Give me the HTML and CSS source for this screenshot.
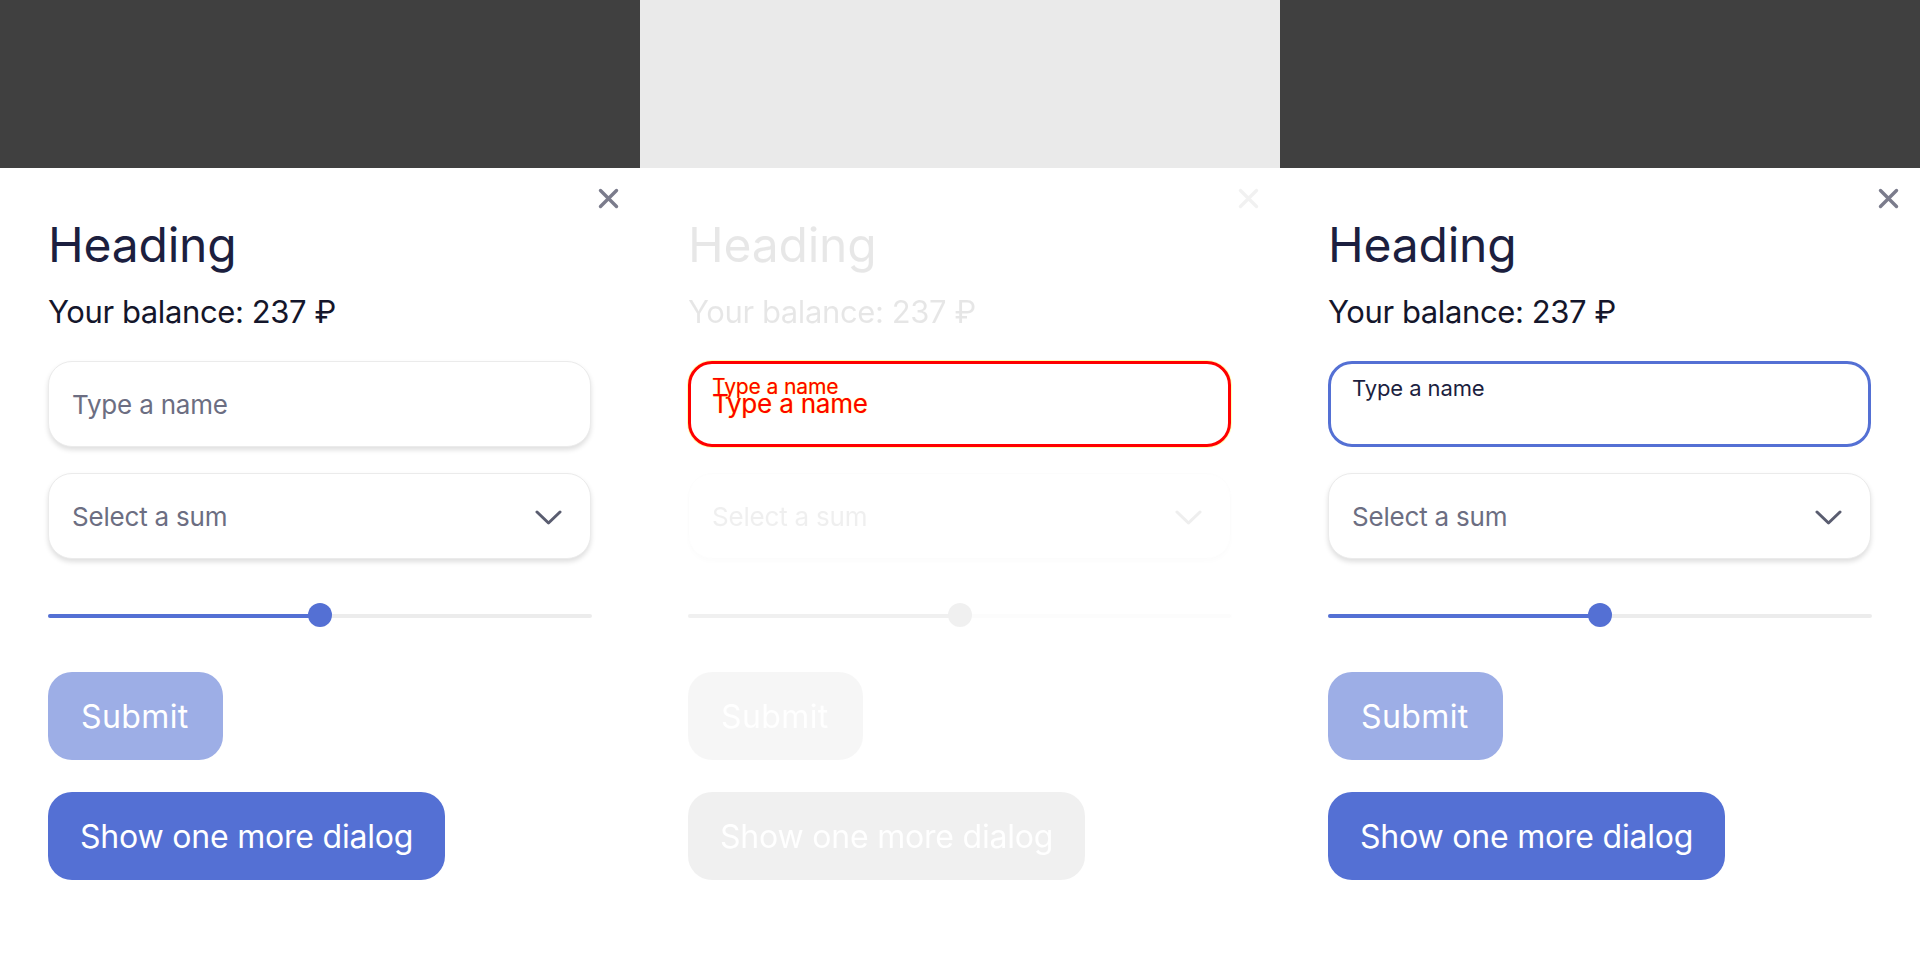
FILE: index.html
```html
<!DOCTYPE html>
<html lang="en">
<head>
<meta charset="utf-8">
<title>Dialogs</title>
<link rel="stylesheet" href="styles.css">
</head>
<body>
<div class="row">

  <section class="panel">
    <div class="band"></div>
    <div class="dialog">
      <button class="close" aria-label="Close"><svg viewBox="0 0 21 21" width="21" height="21"><path d="M2.5 2.5 L18.5 18.5 M18.5 2.5 L2.5 18.5" stroke="currentColor" stroke-width="3.4" stroke-linecap="round"/></svg></button>
      <h1 class="title">Heading</h1>
      <p class="balance">Your balance: 237 ₽</p>
      <div class="field"><span class="placeholder">Type a name</span></div>
      <div class="field select"><span class="placeholder">Select a sum</span>
        <svg class="chev" viewBox="0 0 27 15" width="27" height="15"><path d="M2 2 L13.5 13 L25 2" fill="none" stroke="currentColor" stroke-width="3" stroke-linecap="round" stroke-linejoin="round"/></svg>
      </div>
      <div class="slider"><div class="track"><div class="fill" style="width:50%"></div></div><div class="thumb" style="left:50%"></div></div>
      <button class="btn btn-light submit">Submit</button>
      <button class="btn btn-primary more">Show one more dialog</button>
    </div>
  </section>

  <section class="panel">
    <div class="band band-light"></div>
    <div class="dialog">
      <button class="close ghost" aria-label="Close"><svg viewBox="0 0 21 21" width="21" height="21"><path d="M2.5 2.5 L18.5 18.5 M18.5 2.5 L2.5 18.5" stroke="currentColor" stroke-width="3.4" stroke-linecap="round"/></svg></button>
      <h1 class="title ghost">Heading</h1>
      <p class="balance ghost">Your balance: 237 ₽</p>
      <div class="field field-error"><span class="label">Type a name</span><span class="placeholder">Type a name</span></div>
      <div class="field select ghost"><span class="placeholder">Select a sum</span>
        <svg class="chev" viewBox="0 0 27 15" width="27" height="15"><path d="M2 2 L13.5 13 L25 2" fill="none" stroke="currentColor" stroke-width="3" stroke-linecap="round" stroke-linejoin="round"/></svg>
      </div>
      <div class="slider ghost"><div class="track"><div class="fill" style="width:50%"></div></div><div class="thumb" style="left:50%"></div></div>
      <button class="btn btn-light submit ghost">Submit</button>
      <button class="btn btn-primary more ghost">Show one more dialog</button>
    </div>
  </section>

  <section class="panel">
    <div class="band"></div>
    <div class="dialog">
      <button class="close" aria-label="Close"><svg viewBox="0 0 21 21" width="21" height="21"><path d="M2.5 2.5 L18.5 18.5 M18.5 2.5 L2.5 18.5" stroke="currentColor" stroke-width="3.4" stroke-linecap="round"/></svg></button>
      <h1 class="title">Heading</h1>
      <p class="balance">Your balance: 237 ₽</p>
      <div class="field field-focus"><span class="label">Type a name</span></div>
      <div class="field select"><span class="placeholder">Select a sum</span>
        <svg class="chev" viewBox="0 0 27 15" width="27" height="15"><path d="M2 2 L13.5 13 L25 2" fill="none" stroke="currentColor" stroke-width="3" stroke-linecap="round" stroke-linejoin="round"/></svg>
      </div>
      <div class="slider"><div class="track"><div class="fill" style="width:50%"></div></div><div class="thumb" style="left:50%"></div></div>
      <button class="btn btn-light submit">Submit</button>
      <button class="btn btn-primary more">Show one more dialog</button>
    </div>
  </section>

</div>
</body>
</html>
```

FILE: styles.css
```css
* { box-sizing: border-box; }
html, body { margin: 0; padding: 0; }
body {
  width: 1920px;
  height: 960px;
  overflow: hidden;
  background: #fff;
  font-family: Inter, "Noto Sans", sans-serif;
}
.row { display: flex; height: 960px; }
.panel { width: 640px; display: flex; flex-direction: column; background: #fff; }
.band { height: 168px; background: #404040; flex: none; }
.band-light { background: #eaeaea; }

.dialog {
  position: relative;
  width: 640px;
  padding: 48px 48px 0 48px;
  display: flex;
  flex-direction: column;
  align-items: flex-start;
}

.close {
  position: absolute;
  top: 20px;
  right: 21px;
  width: 21px;
  height: 21px;
  padding: 0;
  border: 0;
  background: none;
  color: #7b7c8c;
  display: flex;
}

.title {
  margin: 0;
  font-size: 48px;
  line-height: 58px;
  font-weight: 400;
  letter-spacing: -0.2px;
  color: #1c1f3f;
  white-space: nowrap;
}
.balance {
  margin: 18px 0 0 0;
  font-size: 31px;
  line-height: 40px;
  letter-spacing: -0.4px;
  color: #14162b;
  white-space: nowrap;
}

.field {
  position: relative;
  width: 543px;
  height: 86px;
  margin-top: 29px;
  border: 1px solid #ebebeb;
  border-radius: 24px;
  background: #fff;
  box-shadow: 0 3px 5px rgba(0, 0, 0, 0.13);
  display: flex;
  align-items: center;
  padding-left: 23px;
}
.placeholder {
  font-size: 26px;
  letter-spacing: -0.2px;
  color: #6c6e82;
  white-space: nowrap;
}
.select {
  margin-top: 26px;
  justify-content: space-between;
  padding-right: 28px;
}
.chev { color: #5a5d70; margin-top: 2px; flex: none; }

.field-focus {
  border: 3px solid #5470d4;
  box-shadow: none;
  align-items: flex-start;
  padding-left: 21px;
}
.label {
  font-size: 22px;
  line-height: 26px;
  letter-spacing: -0.1px;
  color: #1c1f3f;
  margin-top: 11px;
  white-space: nowrap;
}

.field-error {
  border: 3px solid #ff0000;
  box-shadow: 0 0 0 1px rgba(255, 255, 0, 0.3);
  flex-direction: column;
  align-items: flex-start;
  justify-content: flex-start;
  padding-left: 21px;
}
.field-error .label {
  color: #ff0000;
  text-shadow: 0 0 1px #ffff00;
  font-size: 21px;
  line-height: 22px;
  margin-top: 12px;
}
.field-error .placeholder {
  color: #ff0000;
  text-shadow: 0 0 1px #ffff00;
  line-height: 28px;
  margin-top: -8px;
}

.slider {
  position: relative;
  width: 544px;
  height: 25px;
  margin-top: 44px;
  display: flex;
  align-items: center;
}
.track {
  width: 100%;
  height: 4px;
  border-radius: 2px;
  background: #ececec;
  overflow: hidden;
}
.fill { height: 100%; background: #5470d4; }
.thumb {
  position: absolute;
  top: 0;
  width: 24px;
  height: 24px;
  margin-left: -12px;
  border-radius: 50%;
  background: #5470d4;
}

.btn {
  height: 88px;
  border: 0;
  border-radius: 24px;
  padding: 0 32px;
  font-family: inherit;
  font-size: 32px;
  letter-spacing: -0.2px;
  color: #fff;
  white-space: nowrap;
  display: flex;
  align-items: center;
}
.btn-light { background: #9daee6; }
.btn-primary { background: #5470d4; }
.submit { margin-top: 44px; padding: 0 34px 0 33px; letter-spacing: 0.4px; }
.more { margin-top: 32px; }

.ghost { filter: grayscale(1); opacity: 0.1; }
```
